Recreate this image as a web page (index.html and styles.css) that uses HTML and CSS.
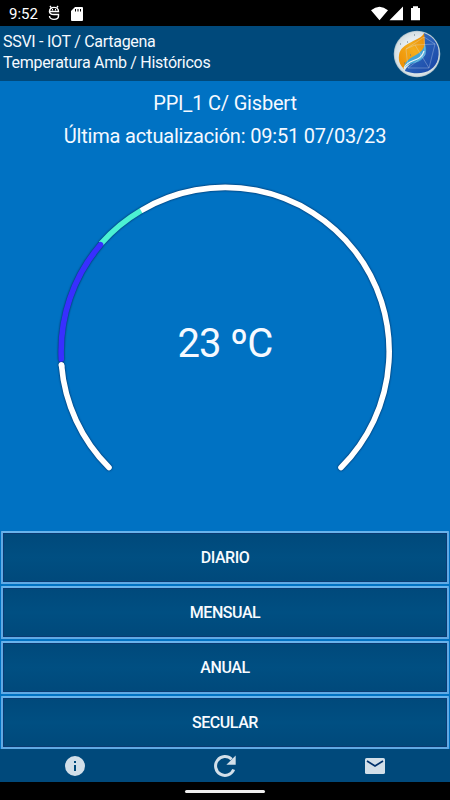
FILE: index.html
```html
<!DOCTYPE html>
<html lang="es">
<head>
<meta charset="utf-8">
<title>SSVI - IOT</title>
<link rel="stylesheet" href="styles.css">
</head>
<body>
<div class="status">
  <span class="clock">9:52</span>
  <svg class="debug" width="12" height="16" viewBox="0 0 12 16" fill="none" stroke="#fff" stroke-width="1.4"><path d="M2 1l1.2 1.6M10 1L8.800 2.600"/><path d="M1.500 6.500C1.500 1 10.500 1 10.500 6.500zM1.500 6.500C1.500 9 3 9.500 6 9.500h4.500V11c0 4.500-9 4.500-9 0"/><path d="M4 4.800h1M7 4.800h1"/></svg>
  <svg class="sd" width="12" height="14" viewBox="0 0 12 14"><path fill="#fff" d="M4 0h7q1 0 1 1v12q0 1-1 1H1q-1 0-1-1V4z"/><path stroke="#000" d="M4.500 2v2.500M7 2v2.500M9.500 2v2.500"/></svg>
  <span class="spacer"></span>
  <svg width="50" height="16" viewBox="0 0 50 16" fill="#fff"><path d="M0 4.300Q8.500-2.800 17 4.300L8.500 14.300zM18.500 14.300L32 .5v13.800zM40 2h2V.3h5V2h2v12.300h-9z"/></svg>
</div>
<header class="header">
  <div class="titles"><div>SSVI - IOT / Cartagena</div><div>Temperatura Amb / Históricos</div></div>
  <svg class="logo" width="48" height="48" viewBox="0 0 48 48">
    <defs>
      <radialGradient id="rim"><stop offset=".7" stop-color="#e5edf0"/><stop offset=".94" stop-color="#d5dfe2"/><stop offset="1" stop-color="#9db5c2"/></radialGradient>
      <linearGradient id="gold" x1="0" y1="1" x2="1" y2="0"><stop stop-color="#ee8b00"/><stop offset=".55" stop-color="#f4ad1b"/><stop offset="1" stop-color="#e98700"/></linearGradient>
      <linearGradient id="blue" x1="0" y1="0" x2="1" y2="1"><stop stop-color="#3978c8"/><stop offset="1" stop-color="#1743a4"/></linearGradient>
    </defs>
    <circle cx="24" cy="24" r="23.300" fill="url(#rim)"/>
    <path d="M31 3C42 7 48 17 45 29C42 41 28 47 12 41C14 33 31 29 31 18z" fill="url(#blue)"/>
    <path d="M31 3C28 11 8 12 6 25C5 32 8 36 11 39C11 28 32 25 32 16Q32 9 31 3z" fill="url(#gold)"/>
    <path d="M11 38C13 25 29 27 32 14C36 24 29 32 21 33Q15 34 11 38z" fill="#43a4d5"/>
    <path d="M11 38C15 28 28 33 31 21" fill="none" stroke="#e8f4f8" stroke-width="1.200"/>
    <path d="M13 19L31 7L42 14L36 38L15 38L13 19L22 15L36 38M31 7L32 25L15 38M22 15L42 14" fill="none" stroke="#d8e3f2" stroke-opacity=".4" stroke-width=".8"/>
    <path d="M7 14h1M14 12h1M21 5h1M17 25h1M11 33h1" stroke="#5f7881"/>
  </svg>
</header>
<main class="main">
  <div class="place">PPI_1 C/ Gisbert</div>
  <div class="updated">Última actualización: 09:51 07/03/23</div>
  <div class="gauge">
    <svg width="350" height="310" viewBox="50 180 350 310" fill="none" stroke-width="5.600" stroke-linecap="round">
      <g class="arcs">
        <path stroke="#fff" d="M109 467.500A164 164 0 0 1 61.500 365"/>
        <path stroke="#fff" d="M142 210.050A164 164 0 0 1 341 467.500"/>
        <path stroke="#4bf1d3" stroke-linecap="butt" d="M101 243.600A164 164 0 0 1 141 210.600"/>
        <path stroke="#382fff" d="M61.300 359A164 164 0 0 1 100.500 244.700"/>
        <path stroke="#fff" d="M61.500 365L61.600 366"/>
      </g>
    </svg>
    <div class="value">23 ºC</div>
  </div>
</main>
<div class="buttons">
  <button>DIARIO</button>
  <button>MENSUAL</button>
  <button>ANUAL</button>
  <button>SECULAR</button>
</div>
<footer class="footer">
  <div><svg width="24" height="24" viewBox="0 0 24 24"><path d="M12 2a10 10 0 1 0 0 20a10 10 0 1 0 0-20zm1 15h-2v-6h2zm0-8h-2V7h2z"/></svg></div>
  <div><svg width="24" height="24" viewBox="0 0 24 24"><path class="turn" d="M20.700 15.500A9.400 9.400 0 1 1 18.600 5.300"/><path d="M22.700 1.500v9.300h-9.300z"/></svg></div>
  <div><svg width="24" height="24" viewBox="0 0 24 24"><rect x="2" y="4" width="20" height="16" rx="1.600"/><path class="flap" d="M4 7l8 5l8-5"/></svg></div>
</footer>
<div class="navbar"><span></span></div>
</body>
</html>
```
FILE: styles.css
```css
* { box-sizing: border-box; }
body {
  margin: 0;
  width: 450px;
  height: 800px;
  display: flex;
  flex-direction: column;
  overflow: hidden;
  background: #0072c3;
  color: #f5f9ff;
  font-family: Roboto, sans-serif;
}
.status {
  height: 26px;
  flex: none;
  display: flex;
  align-items: center;
  padding: 1px 29px 0 9px;
  background: #000;
  color: #fff;
}
.clock { width: 39px; font-size: 15px; line-height: 24px; }
.debug { margin-top: -2px; }
.sd { margin-left: 11px; }
.spacer { flex: 1; }
.header {
  height: 55px;
  flex: none;
  display: flex;
  justify-content: space-between;
  padding: 5px 9px 0 3px;
  background: #00497b;
  font-size: 16px;
  letter-spacing: -0.28px;
  line-height: 21px;
}
.logo { margin-top: -1px; }
.main {
  flex: 1;
  text-align: center;
  font-size: 20px;
  letter-spacing: -0.19px;
}
.place { padding-top: 6px; line-height: 32px; }
.updated { line-height: 34px; }
.gauge { display: grid; margin-top: 27px; justify-items: center; }
.gauge > * { grid-area: 1 / 1; }
.arcs { filter: drop-shadow(0 0 1px #00204d); }
.value { padding-top: 139px; font-size: 40px; letter-spacing: -0.8px; line-height: 50px; }
.buttons {
  flex: none;
  display: flex;
  flex-direction: column;
  gap: 2px;
  padding: 0 1px;
}
.buttons button {
  height: 53px;
  border: 2px solid #60a9e4;
  border-top-color: #68b3ec;
  border-radius: 1px;
  background: linear-gradient(#00497b, #004f82 50%, #00497b);
  box-shadow: inset 0 0 0 1px #0b3a72;
  color: #f8fbff;
  font: 500 16px Roboto, sans-serif;
  letter-spacing: -0.45px;
  padding: 0 0 1px;
}
.footer {
  height: 33px;
  flex: none;
  display: grid;
  grid-template-columns: repeat(3, 1fr);
  background: #00497b;
  fill: #d2dfe9;
}
.footer div { display: flex; align-items: center; justify-content: center; }
.turn { fill: none; stroke: #d2dfe9; stroke-width: 3; }
.flap { fill: none; stroke: #00316b; stroke-width: 1.7; }
.navbar {
  height: 18px;
  flex: none;
  display: flex;
  justify-content: center;
  background: #000;
}
.navbar span { width: 80px; height: 3px; margin-top: 8px; border-radius: 2px; background: #eee; }
```
